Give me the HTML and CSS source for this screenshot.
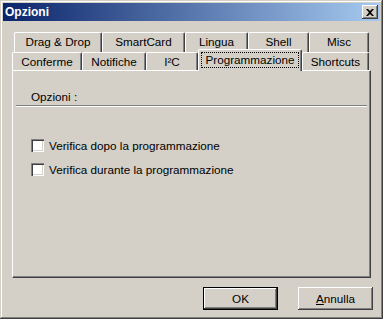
FILE: index.html
```html
<!DOCTYPE html>
<html>
<head>
<meta charset="utf-8">
<link rel="stylesheet" href="styles.css">
</head>
<body>
<div class="window">
  <div class="titlebar">
    <span class="title">Opzioni</span>
    <span class="close"><svg width="8" height="7" viewBox="0 0 8 7"><path d="M0 0h2l2 2 2-2h2L5 3.5 8 7H6L4 5 2 7H0l3-3.5z" fill="#000"/></svg></span>
  </div>
  <div class="tabs">
    <div class="tabrow back">
      <div class="tab w-drag">Drag &amp; Drop</div>
      <div class="tab w-smart">SmartCard</div>
      <div class="tab w-lingua">Lingua</div>
      <div class="tab w-shell">Shell</div>
      <div class="tab w-misc">Misc</div>
    </div>
    <div class="tabrow front">
      <div class="tab w-conf">Conferme</div>
      <div class="tab w-notif">Notifiche</div>
      <div class="tab w-i2c">I²C</div>
      <div class="tab w-prog selected"><span class="focus">Programmazione</span></div>
      <div class="tab w-short">Shortcuts</div>
    </div>
    <div class="panel">
      <div class="group-label">Opzioni :</div>
      <div class="separator"></div>
      <div class="checks">
        <label class="check"><span class="box"></span>Verifica dopo la programmazione</label>
        <label class="check"><span class="box"></span>Verifica durante la programmazione</label>
      </div>
    </div>
  </div>
  <div class="buttons">
    <div class="btn default"><span class="btn-inner">OK</span></div>
    <div class="btn"><span class="btn-inner"><u>A</u>nnulla</span></div>
  </div>
</div>
</body>
</html>
```

FILE: styles.css
```css
* { box-sizing: border-box; }
html, body { margin: 0; padding: 0; background: #d4d0c8; }
body { font-family: "Liberation Sans", Arial, sans-serif; font-size: 11.7px; color: #000; }

.window {
  width: 383px;
  height: 319px;
  background: #d4d0c8;
  padding: 3px;
  box-shadow: inset -1px -1px #404040, inset 1px 1px #d4d0c8, inset -2px -2px #808080, inset 2px 2px #ffffff;
  display: flex;
  flex-direction: column;
}

.titlebar {
  height: 18px;
  background: linear-gradient(to right, #0a246a, #a6caf0);
  display: flex;
  align-items: center;
  justify-content: space-between;
  padding: 0 2px 0 2px;
}
.title {
  color: #fff;
  font-weight: bold;
  font-size: 12px;
}
.close {
  width: 16px;
  height: 14px;
  background: #d4d0c8;
  box-shadow: inset -1px -1px #404040, inset 1px 1px #ffffff, inset -2px -2px #808080;
  display: flex;
  align-items: center;
  justify-content: center;
}

.tabs {
  margin: 11px 0 0 9px;
  width: 359px;
}
.tabrow { display: flex; }
.tabrow.back { margin-left: 2px; height: 20px; }
.tabrow.front { height: 18px; align-items: flex-end; }

.tab {
  height: 100%;
  border-top: 1px solid #fff;
  border-left: 1px solid #fff;
  border-right: 1px solid #404040;
  box-shadow: inset -1px 0 #808080;
  border-radius: 2px 2px 0 0;
  display: flex;
  align-items: center;
  justify-content: center;
  padding-bottom: 1px;
  white-space: nowrap;
}
.back .tab { padding-bottom: 2px; }

.w-drag { width: 88px; }
.w-smart { width: 83px; }
.w-lingua { width: 63px; }
.w-shell { width: 61px; }
.w-misc { width: 60px; }
.w-conf { width: 70px; }
.w-notif { width: 64px; }
.w-i2c { width: 52px; }
.w-prog { width: 104px; }
.w-short { width: 67px; }

.tab.selected {
  height: 22px;
  margin-bottom: -1px;
  position: relative;
  z-index: 1;
  background: #d4d0c8;
  padding: 2px 2px 3px 2px;
  align-items: stretch;
}
.focus {
  flex: 1;
  border: 1px dotted #000;
  display: flex;
  align-items: center;
  justify-content: center;
  padding-bottom: 2px;
}

.panel {
  height: 208px;
  border-top: 1px solid #fff;
  border-left: 1px solid #fff;
  border-right: 1px solid #404040;
  border-bottom: 1px solid #404040;
  box-shadow: inset -1px -1px #808080;
  padding: 0 3px 0 3px;
}
.group-label {
  padding: 19px 0 0 15px;
  height: 34px;
}
.separator {
  height: 2px;
  border-top: 1px solid #808080;
  border-bottom: 1px solid #fff;
}
.checks {
  padding: 32px 0 0 15px;
  display: flex;
  flex-direction: column;
  gap: 11px;
}
.check {
  display: flex;
  align-items: center;
  height: 13px;
}
.box {
  width: 13px;
  height: 13px;
  background: #fff;
  box-shadow: inset 1px 1px #808080, inset 2px 2px #404040, inset -1px -1px #fff, inset -2px -2px #d4d0c8;
  margin-right: 5px;
  flex: none;
}

.buttons {
  display: flex;
  justify-content: flex-end;
  gap: 20px;
  margin-top: 9px;
  padding-right: 7px;
}
.btn {
  width: 75px;
  height: 23px;
  box-shadow: inset -1px -1px #404040, inset 1px 1px #fff, inset -2px -2px #808080;
  display: flex;
  align-items: center;
  justify-content: center;
}
.btn.default {
  border: 1px solid #000;
}
.btn-inner { padding-bottom: 1px; }
```
